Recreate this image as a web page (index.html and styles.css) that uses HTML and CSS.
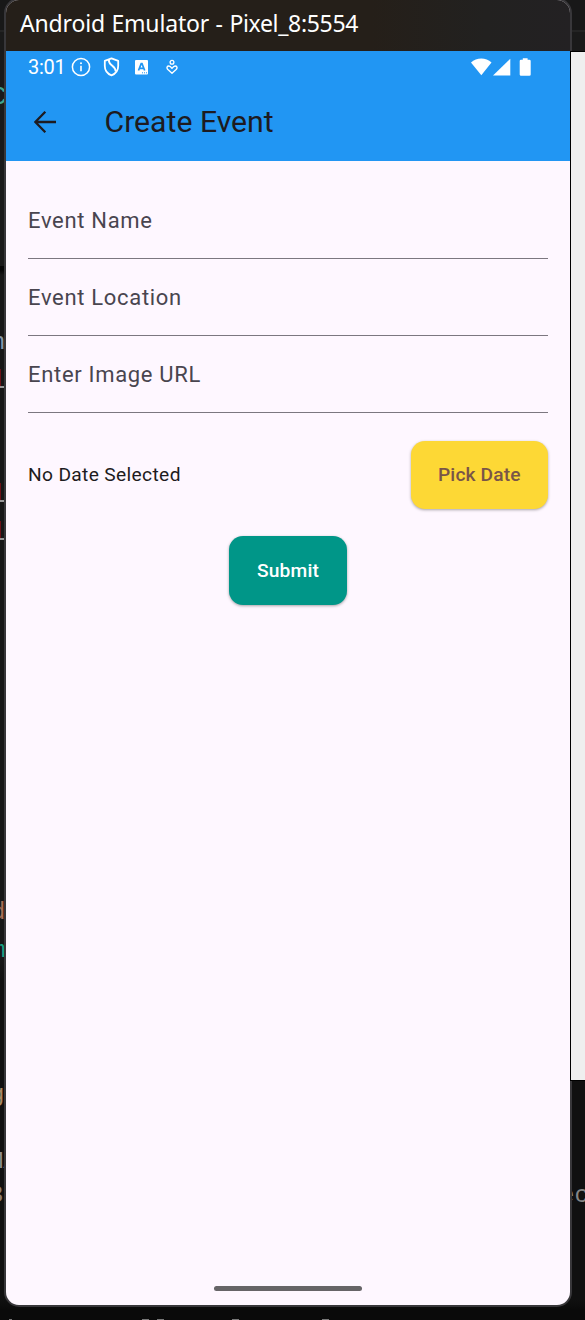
FILE: index.html
```html
<!DOCTYPE html>
<html lang="en">
<head>
<meta charset="utf-8">
<title>Create Event</title>
<link rel="stylesheet" href="styles.css">
</head>
<body>
<div class="desktop">
  <div class="editor" aria-hidden="true">
    <span class="code code-c">C</span>
    <span class="code code-n">n</span>
    <i class="mark mark-a"></i><i class="mark mark-b"></i><i class="mark mark-c"></i>
    <i class="rule rule-a"></i><i class="rule rule-b"></i><i class="rule rule-c"></i>
    <span class="code code-d">d</span>
    <span class="code code-m">m</span>
    <span class="code code-g">g</span>
    <span class="code code-ma">MA</span>
    <span class="code code-num">3:</span>
    <span class="code code-ec">ec</span>
    <i class="tip tip-a"></i><i class="tip tip-b"></i><i class="tip tip-c"></i><i class="tip tip-d"></i><i class="tip tip-e"></i>
  </div>
  <main class="window">
    <header class="titlebar">Android Emulator - <span class="device">Pixel_8:5554</span></header>
    <div class="screen">
      <div class="top">
        <div class="status">
          <span class="time">3:01</span>
          <svg class="ic-info" width="20" height="20" viewBox="0 0 20 20"><circle cx="10" cy="10" r="8.6" fill="none" stroke="#fff" stroke-width="1.5"/><path d="M10 8.800v5.400" stroke="#fff" stroke-width="1.6"/><circle cx="10" cy="6.2" r="1" fill="#fff"/></svg>
          <svg class="ic-shield" width="17" height="20" viewBox="0 0 17 20"><path d="M8.500 1.300L15.200 3.800V9c0 4.500-2.700 7.800-6.700 9.400C4.500 16.800 1.800 13.500 1.800 9V3.800z" fill="none" stroke="#fff" stroke-width="1.8" stroke-linejoin="round"/><path d="M6 2.600C4.800 8.500 12.500 8.300 12.800 14.500" fill="none" stroke="#fff" stroke-width="1.900"/></svg>
          <svg class="ic-a" width="13" height="15" viewBox="0 0 13 15"><rect width="13" height="14.500" rx="1" fill="#fff"/><path d="M3.500 10.500L6.200 3.700h.8l2.700 6.800M4.500 8.300h4.200" fill="none" stroke="#2196f3" stroke-width="1.700"/><path d="M7 12.800h5" stroke="#2196f3" stroke-width="1" stroke-dasharray="1 1"/></svg>
          <svg class="ic-heart" width="12" height="16" viewBox="0 0 12 16"><circle cx="6" cy="3.300" r="1.900" fill="none" stroke="#fff" stroke-width="1.300"/><path d="M6 14.200L1.900 10.500C.2 8.600 1.200 7 2.900 7 4.300 7 5.200 8.200 6 9.300 6.800 8.200 7.700 7 9.100 7c1.700 0 2.700 1.600 1 3.500z" fill="none" stroke="#fff" stroke-width="1.400" stroke-linejoin="round"/></svg>
          <svg class="ic-system" width="62" height="18" viewBox="0 0 62 18"><path d="M0 4.600C5.500-1 15-1 20.500 4.600L10.300 17.200z" fill="#fff"/><path d="M39.300.7V17.500H22z" fill="#fff"/><path d="M51.800.2h4.800v1.600h1.800q1.300 0 1.300 1.300v13.300q0 1.300-1.300 1.300h-8.400q-1.300 0-1.300-1.300V3.100q0-1.300 1.300-1.300h1.800z" fill="#fff"/></svg>
        </div>
        <div class="appbar">
          <svg class="back" width="22" height="22" viewBox="0 0 22 22"><path d="M11.300.8L1.300 11l10 10.200M1.500 11H22" fill="none" stroke="#1d1b20" stroke-width="2.300"/></svg>
          <h1>Create Event</h1>
        </div>
      </div>
      <form class="form">
        <div class="field">Event Name</div>
        <div class="field">Event Location</div>
        <div class="field">Enter Image URL</div>
        <div class="date-row">
          <span>No Date Selected</span>
          <button type="button" class="btn pick">Pick Date</button>
        </div>
        <button type="button" class="btn submit">Submit</button>
      </form>
      <div class="handle"></div>
    </div>
  </main>
  <div class="side-panel"></div>
</div>
</body>
</html>
```
FILE: styles.css
```css
* { box-sizing: border-box; }
body { margin: 0; background: #111; font-family: Roboto, sans-serif; }
.desktop { position: relative; width: 585px; height: 1320px; overflow: hidden; }

/* Editor behind the emulator window */
.editor { position: absolute; inset: 0; background: linear-gradient(#181818 0 30px, #242424 30px 32px, #1a1a1a 32px 266px, #050505 266px 270px, #171717 275px 960px, #101010 980px 1300px, #0a0a0a 1310px); }
.code { position: absolute; font: 24px/28px "Liberation Mono", monospace; white-space: nowrap; }
.code-c { left: -9px; top: 83px; font-size: 26px; color: #3fa58f; }
.code-n { left: -9px; top: 329px; color: #8397aa; }
.code-d { left: -9px; top: 899px; color: #a66e55; }
.code-m { left: -9px; top: 937px; color: #18a084; }
.code-g { left: -10px; top: 1081px; color: #a98a65; }
.code-ma { left: -11px; top: 1148px; color: #909090; }
.code-num { left: -11px; top: 1182px; color: #8d8074; }
.code-ec { left: 560px; top: 1182px; color: #858585; }
.mark { position: absolute; left: 0; width: 1px; height: 17px; background: #6b1117; }
.mark-a { top: 369px; }
.mark-b { top: 483px; }
.mark-c { top: 521px; }
.rule { position: absolute; left: 0; width: 4px; height: 2px; background: #999; }
.rule-a { top: 386px; }
.rule-b { top: 500px; }
.rule-c { top: 538px; }
.tip { position: absolute; top: 1319px; height: 1px; width: 7px; background: #777; }
.tip-a { left: 9px; width: 3px; }
.tip-b { left: 142px; }
.tip-c { left: 157px; }
.tip-d { left: 232px; }
.tip-e { left: 322px; }

.window { position: relative; display: flex; flex-direction: column; width: 568px; height: 1309px; margin: -2px 0 0 4px; border: 2px solid #38373a; border-radius: 15px; overflow: hidden; background: #fef7ff; }
.titlebar { flex: none; height: 51px; padding-left: 14px; font: 23px/47px "Noto Sans", sans-serif; letter-spacing: -.17px; word-spacing: .7px; color: #fff; background: linear-gradient(90deg, #251f19 0 65%, #222120 85%, #232123); }
.device { letter-spacing: -.33px; }
.screen { flex: 1; display: flex; flex-direction: column; }
.top { height: 110px; background: #2196f3; }
.status { display: flex; align-items: center; height: 32px; padding-left: 22px; color: #fff; }
.time { width: 43.3px; font-size: 20px; letter-spacing: -.3px; }
.ic-shield { margin-left: 12px; }
.ic-a { margin-left: 15px; }
.ic-heart { margin-left: 18px; }
.ic-system { margin-left: 293px; }
.appbar { display: flex; align-items: center; height: 77px; padding-left: 28px; }
.appbar h1 { margin: 0 0 0 48.5px; font-size: 30.2px; font-weight: 400; color: #1d1b20; }
.form { display: flex; flex-direction: column; padding: 21.3px 22px 22px; }
.field { height: 76.8px; padding-top: 22.9px; border-bottom: 1.4px solid #7c7780; color: #49454f; font-size: 22px; line-height: 32px; letter-spacing: .68px; }
.date-row { display: flex; align-items: center; justify-content: space-between; margin-top: 28.1px; font-size: 19.2px; letter-spacing: .34px; color: #1d1b20; }
.btn { border: 0; padding: 0; border-radius: 14px; font: 500 19.2px Roboto, sans-serif; letter-spacing: .14px; box-shadow: 0 1px 3px rgba(0, 0, 0, .35); }
.pick { width: 137.3px; height: 68.4px; color: #795548; background: #fdd835; }
.submit { align-self: center; width: 117.4px; height: 68.6px; margin-top: 27.2px; color: #fff; background: #009688; }
.handle { width: 148px; height: 5px; margin: auto auto 14px 208px; border-radius: 3px; background: #666467; }

/* Neighbouring window overlapping the emulator's right edge */
.side-panel { position: absolute; left: 570px; top: 51px; width: 15px; height: 1030px; border: solid #000; border-width: 1px 0 1px 1px; background: #efefef; }
```
